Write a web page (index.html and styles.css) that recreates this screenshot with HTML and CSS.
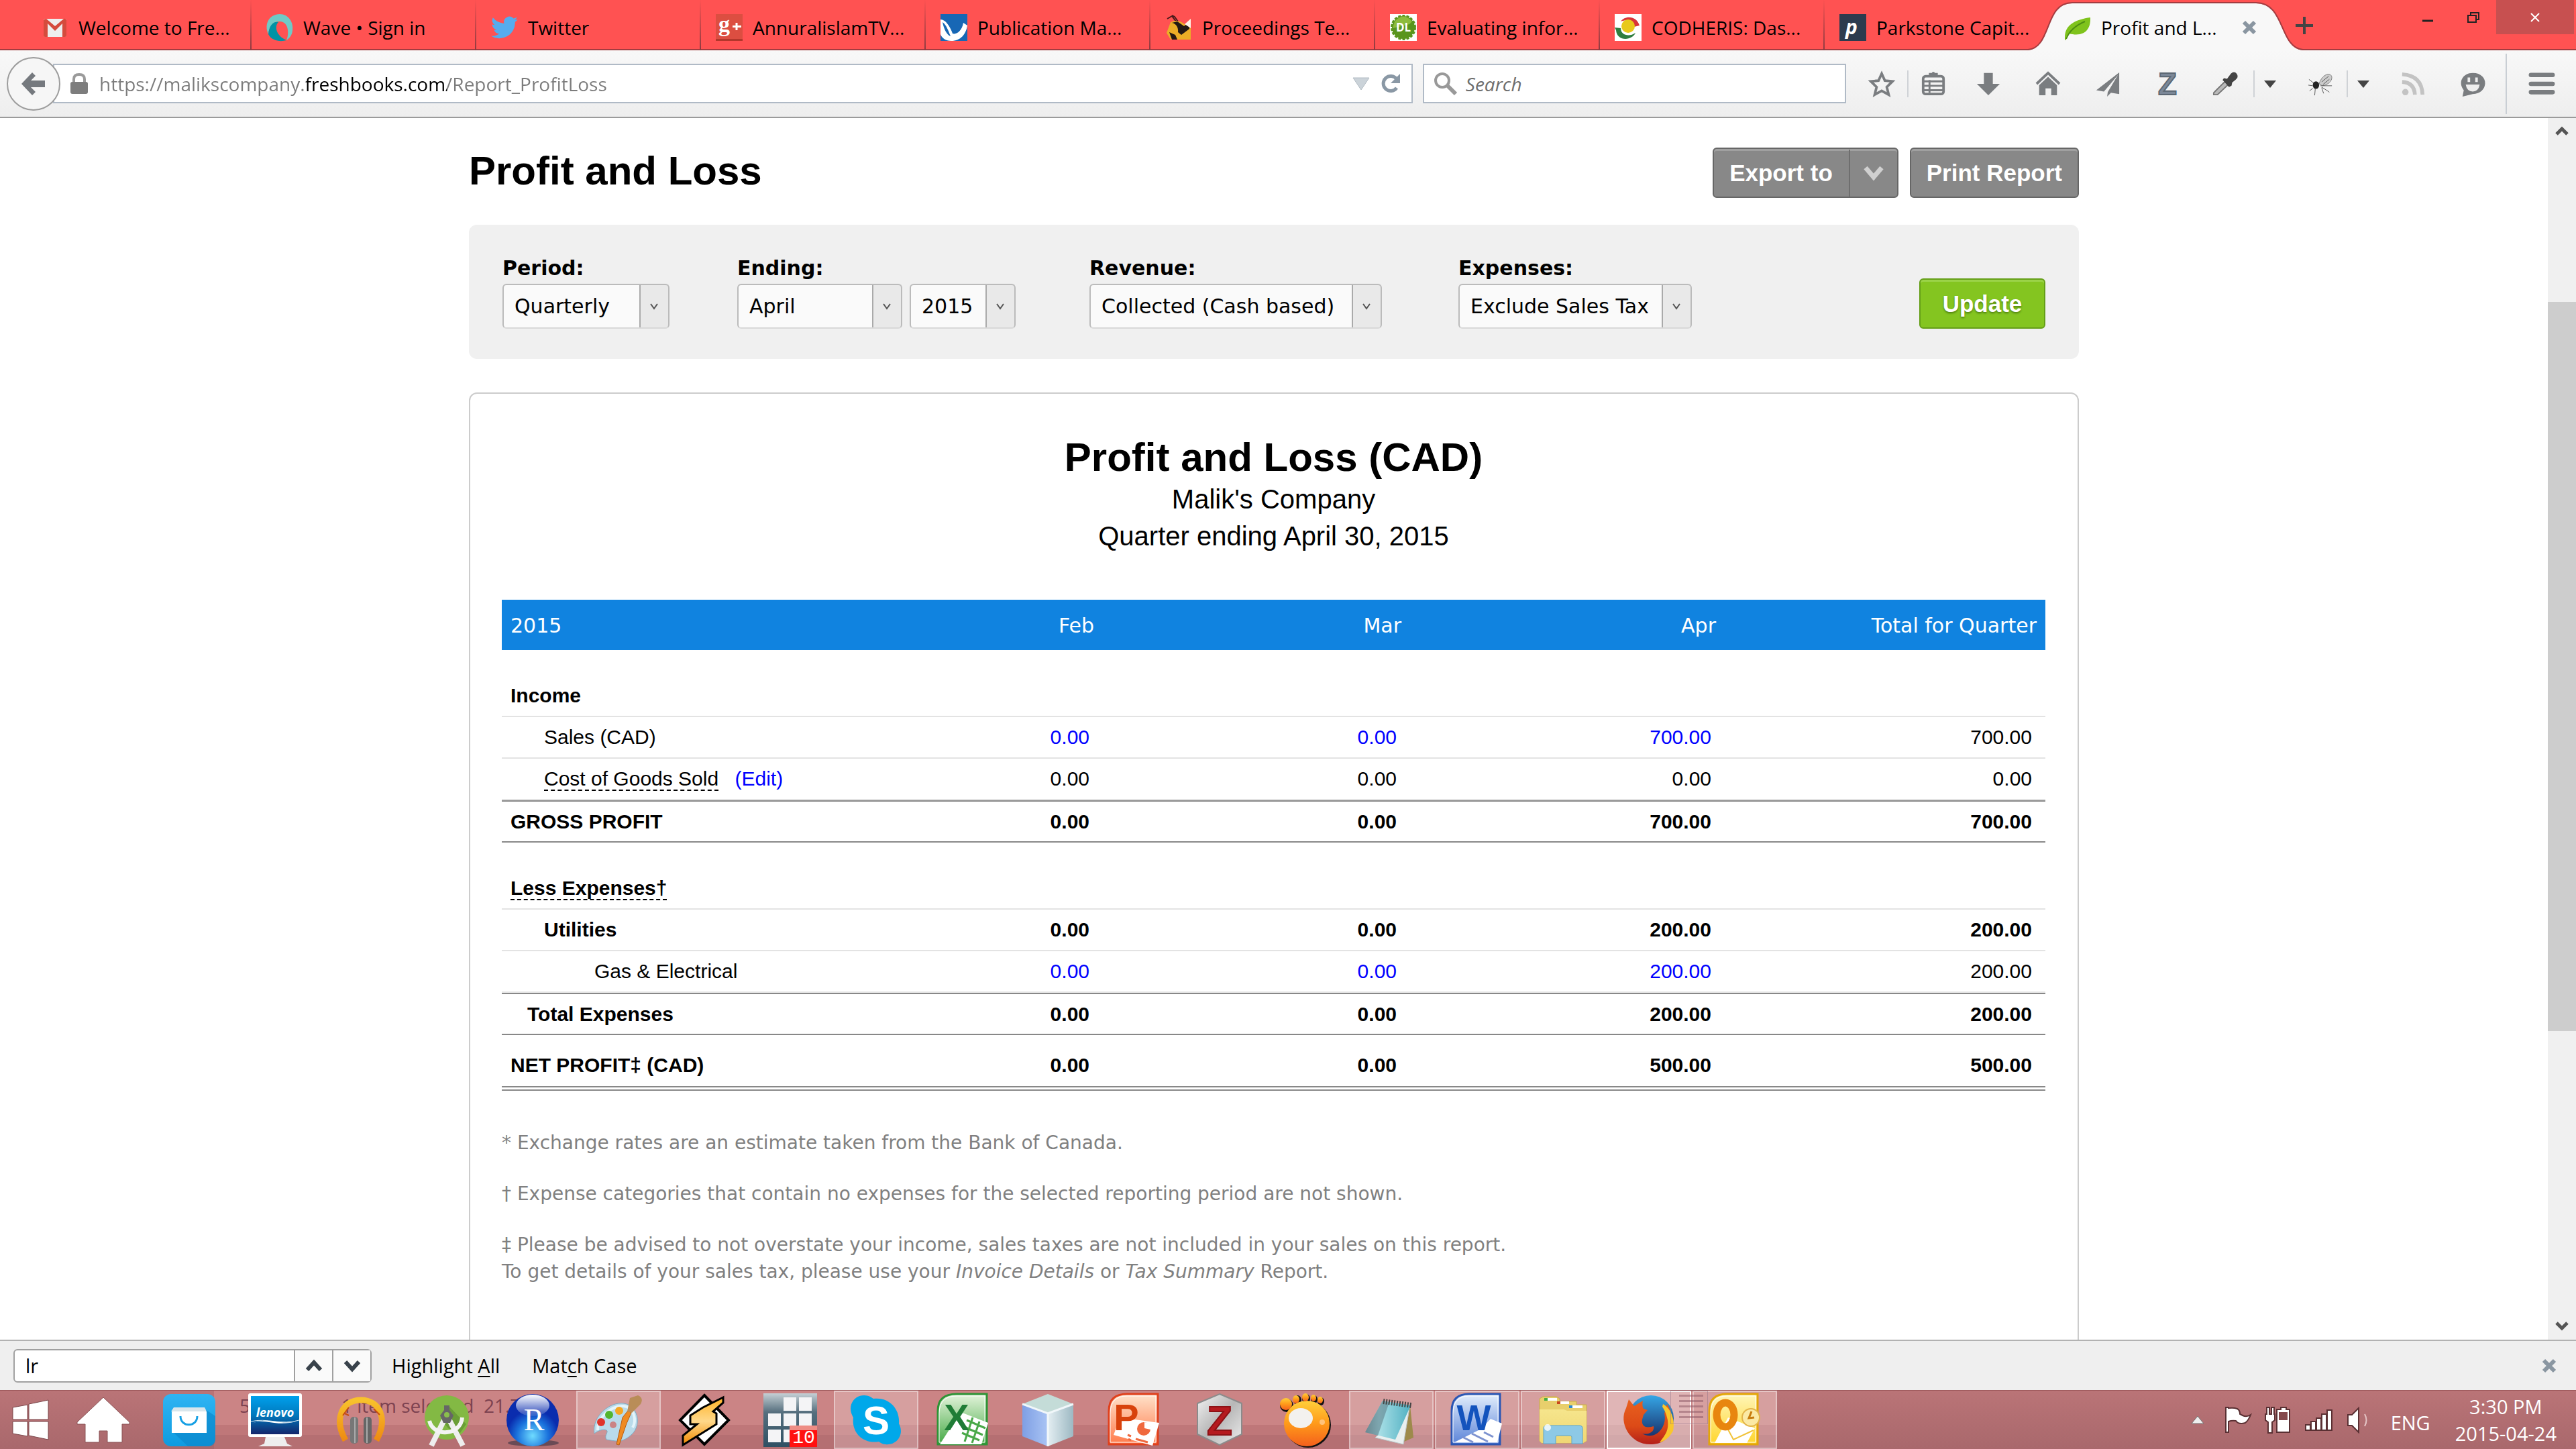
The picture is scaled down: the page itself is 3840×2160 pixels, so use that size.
FILE: index.html
```html
<!DOCTYPE html>
<html lang="en">
<head>
<meta charset="utf-8">
<title>Profit and Loss</title>
<link rel="stylesheet" href="styles.css">
</head>
<body>
<header class="titlebar">
  <nav class="tabs">
    <a class="tab" href="#"><svg class="fav" viewBox="0 0 40 40"><rect x="3" y="7" width="34" height="27" rx="3" fill="#eee"/><path d="M3 9v23q0 2 3 2h3V14l11 11 11-11v20h3q3 0 3-2V9q-1-3-4-2L20 18 7 7Q4 7 3 9z" fill="#d54b3d"/></svg><span>Welcome to Fre...</span></a>
    <a class="tab" href="#"><svg class="fav" viewBox="0 0 40 40"><path d="M3 30C-4 14 5 0 20 0c13 0 21 12 19 25-1 8-6 12-9 14 4-8 4-28-10-28C10 11 4 18 3 30z" fill="#6fcac6"/><path d="M3 30C4 18 10 10 18 12c-6 6-4 20 12 27-10 3-23 0-27-9z" fill="#0093a5"/></svg><span>Wave • Sign in</span></a>
    <a class="tab" href="#"><svg class="fav" viewBox="0 0 24 24"><path fill="#55acee" d="M23.900 4.600a10 10 0 0 1-2.800.8 5 5 0 0 0 2.100-2.700c-1 .6-2 1-3.100 1.200a4.900 4.900 0 0 0-8.400 4.500A14 14 0 0 1 1.700 3.200 4.900 4.900 0 0 0 3.200 9.700a4.900 4.900 0 0 1-2.200-.6v.1a4.900 4.900 0 0 0 3.900 4.800 5 5 0 0 1-2.200.1 4.900 4.900 0 0 0 4.600 3.400A9.900 9.900 0 0 1 0 19.500 14 14 0 0 0 21.500 7.100a10 10 0 0 0 2.400-2.500z"/></svg><span>Twitter</span></a>
    <a class="tab" href="#"><svg class="fav" viewBox="0 0 40 40"><path d="M0 0h40v40H0z" fill="#dc4e41"/><path d="M0 37h40v3H0z" fill="#b3372c"/><text x="4" y="26" class="g" font-size="34" font-weight="700" fill="#fff">g</text><path d="M31 13v11M25 18.500h13" stroke="#fff" stroke-width="3"/></svg><span>AnnuralislamTV...</span></a>
    <a class="tab" href="#"><svg class="fav" viewBox="0 0 40 40"><path d="M0 0h40v40H0z" fill="#1767b5"/><path d="M0 8c8 0 15 12 18 21 6 2 14-4 16-16l6 4c-2 13-10 23-24 23C8 40 2 36 0 30z" fill="#fff"/><path d="M3 12c6 4 9 14 12 21-6-2-10-11-12-21z" fill="#1767b5"/></svg><span>Publication Ma...</span></a>
    <a class="tab" href="#"><svg class="fav" viewBox="0 0 40 40"><path d="M3 7l7-4 9 12M10 2l4 2 7 10" fill="none" stroke="#4a1a1a" stroke-width="2"/><path d="M8 12c9-5 18 0 22 4l8-9v31H8L2 28z" fill="#ecae26"/><path d="M10 13c6 1 10 7 9 14l5 4 12-9V12L28 18 18 11zM6 27l9 4 3 7h-8z" fill="#241a14"/><path d="M29 15l9-8v14z" fill="#fff2e8"/></svg><span>Proceedings Te...</span></a>
    <a class="tab" href="#"><svg class="fav" viewBox="0 0 40 40"><path d="M0 0h40v40H0z" fill="#fff"/><circle cx="20" cy="20" r="17" fill="#5a951d" stroke="#5a951d" stroke-width="4" stroke-dasharray="4 2"/><path d="M7 11Q20-4 33 11l-4 4Q18 18 4 21z" fill="#8dbb3c"/><text x="9" y="26" class="ui" font-weight="700" font-size="17" fill="#fff">DL</text></svg><span>Evaluating infor...</span></a>
    <a class="tab" href="#"><svg class="fav" viewBox="0 0 40 40"><path d="M0 0h40v40H0z" fill="#fff"/><path d="M9 11C16 1 33 3 37 17l-8 2C28 11 18 7 9 11z" fill="#d8343a"/><path d="M0 20l9 1c0 10 12 14 22 7C26 40 3 41 2 24z" fill="#2f7e3f"/><circle cx="20" cy="18" r="10" fill="#e8c91c"/></svg><span>CODHERIS: Das...</span></a>
    <a class="tab" href="#"><svg class="fav" viewBox="0 0 40 40"><path d="M0 0h40v40H0z" fill="#2d3b4e"/><text x="9" y="30" class="ui" font-weight="700" font-style="italic" font-size="30" fill="#fff">p</text></svg><span>Parkstone Capit...</span></a>
    <a class="tab tab-active" href="#"><svg class="tab-shape" viewBox="0 0 410 75" preserveAspectRatio="none"><path d="M0 75C36 72 24 5 66 5H340C384 5 374 72 410 75z" fill="#f8f8f8"/><path d="M0 74C36 71 24 4 66 4H340C384 4 374 71 410 74" fill="none" stroke="#a33c40" stroke-width="2"/></svg><svg class="fav" viewBox="0 0 40 40"><path d="M1 35C1 15 18 8 39 5c1 17-8 30-32 24-3 3-4 5-4 10l-2-1z" fill="#7fc31c"/><path d="M3 37C8 24 19 16 31 11" fill="none" stroke="#4f8f12" stroke-width="2"/></svg><span>Profit and L...</span><svg class="tab-close" viewBox="0 0 22 22"><path d="M3 3l16 16M19 3L3 19" stroke="#8a96a1" stroke-width="6"/></svg></a>
    <button class="newtab" aria-label="New tab"><svg viewBox="0 0 26 26"><path d="M13 0v26M0 13h26" stroke="#444" stroke-width="4"/></svg></button>
  </nav>
  <div class="winctl">
    <button aria-label="Minimize"><svg viewBox="0 0 20 20"><path d="M2 15h16" stroke="#222" stroke-width="3"/></svg></button>
    <button aria-label="Restore"><svg viewBox="0 0 20 20"><path d="M2 7h12v10H2zM6 6V3h12v10h-3" fill="none" stroke="#222" stroke-width="2"/></svg></button>
    <button class="win-close" aria-label="Close"><svg viewBox="0 0 20 20"><path d="M4 4l12 12M16 4L4 16" stroke="#fff" stroke-width="2"/></svg></button>
  </div>
</header>
<div class="toolbar">
  <button class="back" aria-label="Back"><svg viewBox="0 0 40 40"><path d="M2 20L18 3l5 5-7 7h21v10H16l7 7-5 5z" fill="#75797e"/></svg></button>
  <div class="urlbox">
    <svg class="lock" viewBox="0 0 28 32"><path d="M6 15V9q0-7 8-7t8 7v6" fill="none" stroke="#9a9a9a" stroke-width="4"/><rect x="1" y="13" width="26" height="18" rx="3" fill="#7d7d7d"/></svg>
    <input class="url" type="text" aria-label="Address" value="https://malikscompany.freshbooks.com/Report_ProfitLoss">
    <svg class="ud" viewBox="0 0 26 20"><path d="M1 1h24L13 19z" fill="#cbd3d9" stroke="#b3bcc4"/></svg>
    <svg class="reload" viewBox="0 0 30 30"><path d="M24 21a11 11 0 1 1 0-13" fill="none" stroke="#8a98a5" stroke-width="5"/><path d="M29 0v14H15z" fill="#8a98a5"/></svg>
  </div>
  <div class="searchbox">
    <svg viewBox="0 0 36 36"><circle cx="13" cy="13" r="10" fill="none" stroke="#999" stroke-width="4"/><path d="M20 20l13 13" stroke="#999" stroke-width="6"/></svg>
    <input class="search" type="text" aria-label="Search" placeholder="Search">
  </div>
  <div class="tools">
    <button class="t-star" aria-label="Bookmark"><svg viewBox="0 0 40 40"><path d="M20 4l5 11 12 1-9 9 3 12-11-6-11 6 3-12-9-9 12-1z" fill="none" stroke="#7a7d80" stroke-width="4"/></svg></button>
    <button class="t-clip sep" aria-label="Bookmarks list"><svg viewBox="0 0 40 40"><path d="M14 8V4h4q2-4 4 0h4v4z" fill="#7a7d80" stroke="#7a7d80" stroke-width="2"/><rect x="4" y="8" width="32" height="28" rx="4" fill="none" stroke="#7a7d80" stroke-width="4"/><path d="M5 16h30M5 23h30M5 30h30M14 14v20" stroke="#7a7d80" stroke-width="3"/></svg></button>
    <button aria-label="Downloads"><svg viewBox="0 0 40 40"><path d="M13 3h14v17h11L20 38 2 20h11z" fill="#7a7d80"/></svg></button>
    <button aria-label="Home"><svg viewBox="0 0 40 40"><path d="M2 20L20 3l18 17" fill="none" stroke="#7a7d80" stroke-width="4"/><path d="M6 22L20 9l14 13v16H25V27h-9v11H6z" fill="#7a7d80"/></svg></button>
    <button aria-label="Send"><svg viewBox="0 0 40 40"><path d="M38 2L2 30l12 2L36 6 20 33l-1 7 6-6 13 2z" fill="#7a7d80"/></svg></button>
    <button aria-label="Zotero"><svg viewBox="0 0 40 40"><text x="20" y="37" class="arial" text-anchor="middle" font-weight="700" font-size="48" fill="#7b8797" stroke="#5c6773" stroke-width="2">Z</text></svg></button>
    <button class="t-pick" aria-label="Color picker"><svg viewBox="0 0 40 40"><path d="M2 34L21 15l5 5L8 37H2z" fill="#b9b9b9" stroke="#777" stroke-width="2"/><path d="M18 11l5 1 6-8q5-5 9 0t-2 10l-5 4-1 5-4 2-10-11z" fill="#444"/></svg></button>
    <button class="t-dd sep" aria-label="Picker menu"><svg viewBox="0 0 20 20"><path d="M1 5h18L10 16z" fill="#444"/></svg></button>
    <button class="t-fly" aria-label="Inspector"><svg viewBox="0 0 40 40"><path d="M18 20C21 9 31 2 36 6s0 15-13 17z" fill="#ccc" stroke="#777"/><ellipse cx="13" cy="22" rx="5" ry="6" fill="#222"/><path d="M2 13l8 6M1 22l7 1M12 27L11 38M20 23l18 0M22 25l12 8M8 27l-5 4M22 26l3 9M22 17L33 8M24 21l10-8" stroke="#555"/></svg></button>
    <button class="t-dd sep" aria-label="Inspector menu"><svg viewBox="0 0 20 20"><path d="M1 5h18L10 16z" fill="#444"/></svg></button>
    <button class="t-rss" aria-label="Subscribe"><svg viewBox="0 0 40 40"><circle cx="8" cy="33" r="5" fill="#c3c3c3"/><path d="M3 17q19 1 20 20M3 5q31 2 32 32" fill="none" stroke="#c3c3c3" stroke-width="6"/></svg></button>
    <button class="t-chat" aria-label="Chat"><svg viewBox="0 0 40 40"><path d="M20 3c27 0 25 33 0 33l-16 4 2-10C-4 17 5 3 20 3z" fill="#7a7d80"/><path d="M9 21h22q-2 11-11 11T9 21z" fill="#eee"/><path d="M14 10v7M26 10v7" stroke="#eee" stroke-width="4"/></svg></button>
    <button class="t-menu" aria-label="Menu"><svg viewBox="0 0 40 40"><path d="M3 6h34M3 20h34M3 33h34" stroke="#7a7d80" stroke-width="7" stroke-linecap="round"/></svg></button>
  </div>
</div>

<div class="window">
  <main class="viewport">
    <div class="page">
      <div class="heading">
        <h1>Profit and Loss</h1>
        <div class="actions">
          <button class="btn split"><span>Export to</span><svg viewBox="0 0 30 24"><path d="M3 4l12 14L27 4" fill="none" stroke="#d0d0d0" stroke-width="7"/></svg></button>
          <button class="btn">Print Report</button>
        </div>
      </div>
      <form class="filters">
        <div class="field"><label for="period">Period:</label>
          <span class="pick w-period"><select id="period"><option>Quarterly</option></select><svg viewBox="0 0 12 10"><path d="M1 1l5 7 5-7" fill="none" stroke="#555" stroke-width="2"/></svg></span></div>
        <div class="field"><label for="month">Ending:</label>
          <div class="pair"><span class="pick w-month"><select id="month"><option>April</option></select><svg viewBox="0 0 12 10"><path d="M1 1l5 7 5-7" fill="none" stroke="#555" stroke-width="2"/></svg></span>
          <span class="pick w-year"><select aria-label="Year"><option>2015</option></select><svg viewBox="0 0 12 10"><path d="M1 1l5 7 5-7" fill="none" stroke="#555" stroke-width="2"/></svg></span></div></div>
        <div class="field"><label for="rev">Revenue:</label>
          <span class="pick w-rev"><select id="rev"><option>Collected (Cash based)</option></select><svg viewBox="0 0 12 10"><path d="M1 1l5 7 5-7" fill="none" stroke="#555" stroke-width="2"/></svg></span></div>
        <div class="field"><label for="exp">Expenses:</label>
          <span class="pick w-exp"><select id="exp"><option>Exclude Sales Tax</option></select><svg viewBox="0 0 12 10"><path d="M1 1l5 7 5-7" fill="none" stroke="#555" stroke-width="2"/></svg></span></div>
        <button class="btn update" type="button">Update</button>
      </form>
      <section class="report">
        <h2>Profit and Loss (CAD)</h2>
        <p class="sub">Malik's Company</p>
        <p class="sub">Quarter ending April 30, 2015</p>
        <table>
          <colgroup><col class="c-name"><col class="c-feb"><col class="c-mar"><col class="c-apr"><col class="c-tot"></colgroup>
          <thead><tr><th>2015</th><th>Feb</th><th>Mar</th><th>Apr</th><th>Total for Quarter</th></tr></thead>
          <tbody>
            <tr class="group"><td colspan="5">Income</td></tr>
            <tr><td class="in2">Sales (CAD)</td><td><a href="#">0.00</a></td><td><a href="#">0.00</a></td><td><a href="#">700.00</a></td><td>700.00</td></tr>
            <tr><td class="in2"><span class="hint">Cost of Goods Sold</span> <a class="edit" href="#">(Edit)</a></td><td>0.00</td><td>0.00</td><td>0.00</td><td>0.00</td></tr>
            <tr class="total"><td>GROSS PROFIT</td><td>0.00</td><td>0.00</td><td>700.00</td><td>700.00</td></tr>
            <tr class="group"><td colspan="5"><span class="hint">Less Expenses†</span></td></tr>
            <tr class="strong"><td class="in2">Utilities</td><td>0.00</td><td>0.00</td><td>200.00</td><td>200.00</td></tr>
            <tr><td class="in3">Gas &amp; Electrical</td><td><a href="#">0.00</a></td><td><a href="#">0.00</a></td><td><a href="#">200.00</a></td><td>200.00</td></tr>
            <tr class="total"><td class="in1">Total Expenses</td><td>0.00</td><td>0.00</td><td>200.00</td><td>200.00</td></tr>
            <tr class="net"><td>NET PROFIT‡ (CAD)</td><td>0.00</td><td>0.00</td><td>500.00</td><td>500.00</td></tr>
          </tbody>
        </table>
        <div class="notes">
          <p>* Exchange rates are an estimate taken from the Bank of Canada.</p>
          <p>† Expense categories that contain no expenses for the selected reporting period are not shown.</p>
          <p>‡ Please be advised to not overstate your income, sales taxes are not included in your sales on this report.<br>To get details of your sales tax, please use your <i>Invoice Details</i> or <i>Tax Summary</i> Report.</p>
        </div>
      </section>
    </div>
  </main>
  <div class="scrollbar">
    <svg viewBox="0 0 42 42"><path d="M13 24l8-8 8 8" fill="none" stroke="#555" stroke-width="5"/></svg>
    <div class="thumb"></div>
    <svg viewBox="0 0 42 42"><path d="M13 17l8 8 8-8" fill="none" stroke="#555" stroke-width="5"/></svg>
  </div>
</div>

<div class="findbar">
  <div class="findbox">
    <input type="text" aria-label="Find in page" value="lr">
    <button aria-label="Previous"><svg viewBox="0 0 26 20"><path d="M3 16L13 5l10 11" fill="none" stroke="#39424b" stroke-width="6"/></svg></button>
    <button aria-label="Next"><svg viewBox="0 0 26 20"><path d="M3 4l10 11L23 4" fill="none" stroke="#39424b" stroke-width="6"/></svg></button>
  </div>
  <button class="flat">Highlight <u>A</u>ll</button>
  <button class="flat">Mat<u>c</u>h Case</button>
  <button class="findclose" aria-label="Close find bar"><svg viewBox="0 0 22 22"><path d="M3 3l16 16M19 3L3 19" stroke="#8a96a1" stroke-width="6"/></svg></button>
</div>

<footer class="taskbar">
  <svg width="0" height="0" class="defs"><defs>
    <linearGradient id="blue" x2="0" y2="1"><stop stop-color="#2fb4f3"/><stop offset="1" stop-color="#0d9be0"/></linearGradient>
    <linearGradient id="scr" x2="0" y2="1"><stop stop-color="#00a0ec"/><stop offset=".5" stop-color="#0079bd"/><stop offset="1" stop-color="#14256b"/></linearGradient>
    <linearGradient id="phone" x2="0" y2="1"><stop stop-color="#f8c22c"/><stop offset="1" stop-color="#ee8a12"/></linearGradient>
    <radialGradient id="rball" cy=".8"><stop stop-color="#6fdcff"/><stop offset=".6" stop-color="#1a72dc"/><stop offset="1" stop-color="#0a2cae"/></radialGradient>
    <linearGradient id="gloss" x2="0" y2="1"><stop stop-color="#fff"/><stop offset="1" stop-color="#fff" stop-opacity=".1"/></linearGradient>
    <linearGradient id="bolt" x2="0" y2="1"><stop stop-color="#ffb326"/><stop offset=".5" stop-color="#ffd88a"/><stop offset="1" stop-color="#f38a00"/></linearGradient>
    <linearGradient id="tiles" x2="0" y2="1"><stop stop-color="#c5d0d5"/><stop offset=".35" stop-color="#566f7e"/><stop offset="1" stop-color="#2f5063"/></linearGradient>
    <linearGradient id="xl" x2="0" y2="1"><stop stop-color="#e4f4dc"/><stop offset="1" stop-color="#45a944"/></linearGradient>
    <linearGradient id="pp" x2="0" y2="1"><stop stop-color="#ffe3cb"/><stop offset="1" stop-color="#ff7a4a"/></linearGradient>
    <linearGradient id="wd" x2="0" y2="1"><stop stop-color="#e3eefc"/><stop offset="1" stop-color="#5a83d8"/></linearGradient>
    <linearGradient id="ol" x2="0" y2="1"><stop stop-color="#fff6b8"/><stop offset="1" stop-color="#ffd52c"/></linearGradient>
    <linearGradient id="orange" x2="0" y2="1"><stop stop-color="#ffcf3a"/><stop offset=".5" stop-color="#ff9a1a"/><stop offset="1" stop-color="#f4601c"/></linearGradient>
    <linearGradient id="pad" x2="1"><stop stop-color="#77949d"/><stop offset=".3" stop-color="#a9dfe6"/><stop offset="1" stop-color="#4fb0c2"/></linearGradient>
    <linearGradient id="cubeL" x2="1"><stop stop-color="#7f9fe4"/><stop offset="1" stop-color="#a9c4f4"/></linearGradient>
    <linearGradient id="cubeR" x2="1"><stop stop-color="#e4eef2"/><stop offset="1" stop-color="#9db9c3"/></linearGradient>
    <linearGradient id="silver" x2="1" y2="1"><stop stop-color="#f4f4f4"/><stop offset=".5" stop-color="#b7b7b7"/><stop offset="1" stop-color="#ededed"/></linearGradient>
    <linearGradient id="fold" x2="0" y2="1"><stop stop-color="#f6e58c"/><stop offset="1" stop-color="#efd774"/></linearGradient>
    <linearGradient id="fox" x2="0" y2="1"><stop stop-color="#e8611f"/><stop offset=".6" stop-color="#dc4a17"/><stop offset="1" stop-color="#b41f1a"/></linearGradient>
    <linearGradient id="globe" x2="0" y2="1"><stop stop-color="#35a6e6"/><stop offset="1" stop-color="#16255e"/></linearGradient>
  </defs></svg>
  <div class="ghost" aria-hidden="true"><span>5</span><span>1 item selected&nbsp; 21.7</span></div>
  <div class="ghost-list" aria-hidden="true"></div>
  <button class="start" aria-label="Start"><svg viewBox="0 0 80 80"><path d="M14 21l22-4v22H14zM38 16l29-6v29H38zM14 42h22v22l-22-4zM38 42h29v27l-29-6z" fill="#fff" stroke="#7b474b"/></svg></button>
  <button class="task" aria-label="Home"><svg viewBox="0 0 80 80"><path d="M40 6l39 37v3H68v27H46V56H34v17H13V46H1v-3z" fill="#fff" stroke="#8a5255"/></svg></button>
  <button class="task" aria-label="Store"><svg viewBox="0 0 80 80"><rect x="1" y="1" width="78" height="78" rx="12" fill="url(#blue)"/><path d="M16 58l22 21h30q11 0 11-11V34L64 24z" fill="#0a86c9" opacity=".6"/><path d="M17 22h46l3 6v31H14V28z" fill="#fff"/><path d="M13 27l4-6h46l3 6z" fill="#d9e6ec"/><path d="M27 34c0 17 25 17 25 0" fill="none" stroke="#17a0e4" stroke-width="3"/></svg></button>
  <button class="task" aria-label="Lenovo"><svg viewBox="0 0 80 80"><rect width="80" height="65" rx="3" fill="#fff"/><path d="M26 65h28l4 10 8 4H15l9-4z" fill="#eee"/><path d="M4 4h72v57H4z" fill="url(#scr)"/><text x="40" y="35" class="ui" text-anchor="middle" font-weight="700" font-style="italic" font-size="18" fill="#fff">lenovo</text><path d="M4 46c20-12 32 6 72-5-30 8-50-8-72 5z" fill="#fff"/><path d="M4 42c24-6 45 6 72-2" fill="none" stroke="#cfe6f2"/></svg></button>
  <button class="task" aria-label="Music"><svg viewBox="0 0 80 80"><path d="M17 70C-1 38 12 10 40 10s41 28 23 60" fill="none" stroke="url(#phone)" stroke-width="9"/><path d="M13 33l9-12M59 23l9 9M16 30l6 3" stroke="#c64d12" stroke-width="2"/><rect x="24" y="35" width="12" height="40" rx="5" fill="#777"/><rect x="44" y="35" width="12" height="40" rx="5" fill="#666"/><path d="M31 36v38M49 36v38" stroke="#aaa" stroke-width="2"/></svg></button>
  <button class="task" aria-label="Android Studio"><svg viewBox="0 0 80 80"><circle cx="40" cy="36" r="33" fill="#83b944"/><path d="M44 20l25 26-14 20-20-22z" fill="#6a9e36"/><path d="M36 40L17 78M44 40l20 38" stroke="#eee" stroke-width="8"/><path d="M14 41c6 25 47 22 49-5" fill="none" stroke="#f3f3f3" stroke-width="6"/><path d="M36 18h8v7l6 8-5 11h-10l-5-11 6-8z" fill="#666"/><circle cx="40" cy="32" r="4" fill="#8abf4c"/></svg></button>
  <button class="task" aria-label="RStudio"><svg viewBox="0 0 80 80"><ellipse cx="41" cy="74" rx="38" ry="5" fill="#6a4a55"/><circle cx="40" cy="40" r="39" fill="url(#rball)"/><ellipse cx="40" cy="18" rx="25" ry="16" fill="url(#gloss)"/><text x="42" y="55" class="g" text-anchor="middle" font-size="46" fill="#fff">R</text></svg></button>
  <button class="task open" aria-label="Paint"><svg viewBox="0 0 80 80"><path d="M4 60C0 34 27 12 48 15s27 32 12 46-24 10-38 8c-4-6 4-12 0-14s-12 0-18 5z" fill="#b9dbea" stroke="#7fa9c0"/><path d="M9 55C8 36 30 18 47 19s20 22 14 32" fill="none" stroke="#e4f4fa" stroke-width="4"/><circle cx="32" cy="47" r="5" fill="#ca8485"/><circle cx="14" cy="43" r="6" fill="#e0342a"/><circle cx="26" cy="32" r="6" fill="#53b52f"/><circle cx="41" cy="26" r="6" fill="#f6a623"/><path d="M37 76l9-40 8-10 5 3-7 16-11 32z" fill="#ee8a22" stroke="#b65e12"/><path d="M53 27l4-20 12-4q9 4 4 13l-13 13z" fill="#b98d58"/></svg></button>
  <button class="task" aria-label="Winamp"><svg viewBox="0 0 80 80"><path d="M40 3l36 37-36 36L4 40z" fill="#fff" stroke="#000" stroke-width="4"/><path d="M68 6L38 21 19 33v13h10L8 63v14l50-31V30l-5-3 15-13z" fill="url(#bolt)" stroke="#000" stroke-width="3"/></svg></button>
  <button class="task" aria-label="Calendar"><svg viewBox="0 0 80 80"><path d="M0 0h80v80H0z" fill="url(#tiles)"/><path d="M30 6h19v20H30zM53 6h19v20H53zM7 30h19v19H7zM30 30h19v19H30zM53 30h19v19H53zM7 54h19v19H7zM30 54h19v19H30z" fill="#f4f4f6"/><path d="M39 48h41v32H39z" fill="#f11"/><path d="M39 48h41v7H39z" fill="#ee8d85"/><text x="60" y="74" class="mono" text-anchor="middle" font-size="28" fill="#fff">10</text></svg></button>
  <button class="task open" aria-label="Skype"><svg viewBox="0 0 80 80"><path d="M22 3c7 0 11 3 14 5 24-3 40 16 38 37 9 17-4 33-20 31-4 0-7-2-10-4C20 76 3 58 6 36-4 20 6 3 22 3z" fill="#00a8ea"/><text x="40" y="61" class="arial" text-anchor="middle" font-weight="700" font-size="60" fill="#fff">S</text></svg></button>
  <button class="task" aria-label="Excel"><svg viewBox="0 0 80 80"><path d="M4 76V26Q4 1 32 1h45v75z" fill="url(#xl)" stroke="#2e9436" stroke-width="3"/><path d="M6 73V30Q6 4 32 4h42v69z" fill="none" stroke="#fff"/><path d="M38 28l41 16-10 32H7z" fill="#fff"/><path d="M47 40l28 12M43 50l28 12M40 59l26 11M56 36L44 72M66 42L55 74" stroke="#49a948" stroke-width="3"/><text x="32" y="55" class="arial" text-anchor="middle" font-weight="700" font-size="56" fill="#1f7c36">X</text></svg></button>
  <button class="task" aria-label="VirtualBox"><svg viewBox="0 0 80 80"><path d="M40 1l38 15-38 14L2 16z" fill="#c4dcd8"/><path d="M2 16l38 14v49L2 64z" fill="url(#cubeL)"/><path d="M78 16L40 30v49l38-15z" fill="url(#cubeR)"/><path d="M40 30v49M2 16l38 14 38-14" fill="none" stroke="#f1f7fa" stroke-width="3"/></svg></button>
  <button class="task" aria-label="PowerPoint"><svg viewBox="0 0 80 80"><path d="M3 76V26Q3 1 30 1h46v75z" fill="url(#pp)" stroke="#e0401c" stroke-width="3"/><path d="M5 73V30Q5 4 30 4h43v69z" fill="none" stroke="#fff"/><path d="M20 36l58 8-10 34-58-16z" fill="#fff"/><circle cx="55" cy="53" r="10" fill="#f0693e"/><path d="M56 52v-9q10 1 9 11z" fill="#fff"/><path d="M31 62l5 2M43 68l18 5M32 68l4 2" stroke="#f0693e" stroke-width="3"/><text x="29" y="55" class="arial" text-anchor="middle" font-weight="700" font-size="56" fill="#d8420c">P</text></svg></button>
  <button class="task" aria-label="Zotero"><svg viewBox="0 0 80 80"><path d="M40 1l33 14v46L40 77 7 61V15z" fill="url(#silver)" stroke="#8b8b8b" stroke-width="2"/><text x="40" y="62" class="arial" text-anchor="middle" font-weight="700" font-size="62" fill="#b51a1f" stroke="#8d1216" stroke-width="2">Z</text></svg></button>
  <button class="task" aria-label="GOM Player"><svg viewBox="0 0 80 80"><g fill="#111"><circle cx="44" cy="47" r="34"/><circle cx="12" cy="18" r="10"/><ellipse cx="28" cy="10" rx="6" ry="7"/><ellipse cx="41" cy="8" rx="6" ry="7"/><ellipse cx="53" cy="9" rx="5" ry="6"/><ellipse cx="63" cy="12" rx="5" ry="6"/></g><g fill="url(#orange)"><circle cx="42" cy="45" r="34"/><circle cx="11" cy="16" r="9"/><ellipse cx="26" cy="9" rx="5" ry="6"/><ellipse cx="40" cy="6" rx="5" ry="6"/><ellipse cx="52" cy="7" rx="4" ry="5"/><ellipse cx="62" cy="10" rx="4" ry="5"/></g><ellipse cx="33" cy="37" rx="18" ry="15" fill="#f3f1ee"/><circle cx="65" cy="43" r="4" fill="#ffc27a"/></svg></button>
  <button class="task open" aria-label="Notepad"><svg viewBox="0 0 80 80"><path d="M68 18l5 48-14 6z" fill="#9d8a4b"/><path d="M68 16L58 76 16 66z" fill="#e9efef" stroke="#b9c4c6"/><path d="M27 11l42 7-23 51L1 58z" fill="url(#pad)"/><path d="M1 58L27 11l10 2L20 63z" fill="#60808a" opacity=".6"/><path d="M28 12l42 6" stroke="#444" stroke-width="8" stroke-dasharray="2 2"/></svg></button>
  <button class="task open" aria-label="Word"><svg viewBox="0 0 80 80"><path d="M2 76V26Q2 1 28 1h46v75z" fill="url(#wd)" stroke="#2a56b4" stroke-width="3"/><path d="M4 73V30Q4 4 28 4h43v69z" fill="none" stroke="#fff"/><path d="M60 38l17 7-7 28H6l40-20z" fill="#fff"/><path d="M50 58l14 7M32 60l24 12M18 65l16 8" stroke="#7d92cf" stroke-width="3"/><text x="35" y="55" class="arial" text-anchor="middle" font-weight="700" font-size="54" fill="#1353bd">W</text></svg></button>
  <button class="task open" aria-label="File Explorer"><svg viewBox="0 0 80 80"><path d="M5 20V8l5-3h20l5 3v4h25v5h15v54l-5 3H8l-3-3z" fill="#e8cf6c" stroke="#c9ac48"/><path d="M12 7h19v4H12zM31 12h18v4H31zM49 18h20v4H49z" fill="#fff"/><path d="M12 7h5v4h-5z" fill="#46ad3f"/><path d="M31 12h5v4h-5z" fill="#c9461d"/><path d="M49 18h5v4h-5z" fill="#2a8ad0"/><path d="M5 24h36l5 2h29v45l-5 3H8l-3-3z" fill="url(#fold)"/><path d="M11 75V52q0-4 5-4h48q5 0 5 4v23H53V65q0-2-3-2H31q-2 0-2 2v10z" fill="#8dc9e6" stroke="#5aa5cd"/><circle cx="17" cy="51" r="5" fill="#fff" opacity=".8"/></svg></button>
  <button class="task open focus" aria-label="Firefox"><svg viewBox="0 0 80 80"><circle cx="43" cy="37" r="34" fill="url(#globe)"/><path d="M67 16c12 17 13 59-22 60C12 78-6 44 6 22l4-13 8 10 13-8c-1 5-1 9 1 12l6 2-6 7-2 7c-2 14 11 12 17 10 2 10-10 13-17 11 20 12 38-11 33-30z" fill="url(#fox)"/><path d="M61 16c14 8 18 26 15 40-6 11-14 16-20 17 9-12 14-18 12-33-2-9-4-14-8-20z" fill="#f9c62d"/></svg></button>
  <button class="task open" aria-label="Outlook"><svg viewBox="0 0 80 80"><path d="M2 76V26Q2 1 28 1h46v75z" fill="url(#ol)" stroke="#e3a508" stroke-width="3"/><path d="M4 73V30Q4 4 28 4h43v69z" fill="none" stroke="#fff"/><path d="M10 74l20-38 40 16-12 22z" fill="#fff"/><path d="M30 54l8 15 30-14" fill="none" stroke="#f1c33a" stroke-width="2"/><ellipse cx="26" cy="32" rx="13" ry="18" fill="none" stroke="#e8860f" stroke-width="11"/><circle cx="64" cy="36" r="13" fill="#fbe9a4" stroke="#e3b54a" stroke-width="2"/><path d="M65 27l-4 10 8-1" fill="none" stroke="#c77c0d" stroke-width="3"/></svg></button>
  <div class="tray">
    <svg class="up" viewBox="0 0 20 14"><path d="M10 1l9 11H1z" fill="#eee" stroke="#777"/></svg>
    <svg class="ti" viewBox="0 0 40 40"><path d="M2 1h4v1q8-1 13 1 4 2 4 8l4 2q6 3 12-1-3 8-8 12-10 3-14-3-6-1-11 1v16H2z" fill="#fff" stroke="#5a3033" stroke-width="2"/></svg>
    <svg class="ti" viewBox="0 0 40 40"><path d="M3 1h4v10h3V1h4v10h1v9l-4 3v16H5V23l-4-3v-9h2z" fill="#fff" stroke="#5a3033" stroke-width="2"/><path d="M20 4h4V1h8v3h5v34H18V4z" fill="#fff" stroke="#5a3033" stroke-width="2"/><path d="M21 8h13v12H21z" fill="#84484b"/></svg>
    <svg class="ti" viewBox="0 0 40 40"><path d="M1 27h7v8H1zM9 22h7v13H9zM17 17h7v18h-7zM25 11h7v24h-7zM33 5h7v30h-7z" fill="#fff" stroke="#5a3033" stroke-width="2"/></svg>
    <svg class="ti" viewBox="0 0 40 40"><path d="M4 12h6L20 2v36L10 28H4z" fill="#fff" stroke="#5a3033" stroke-width="2"/><path d="M29 11q5 9 0 18" fill="none" stroke="#e5c5c6" stroke-width="2"/></svg>
    <span class="lang">ENG</span>
    <div class="clock"><span>3:30 PM</span><span>2015-04-24</span></div>
  </div>
</footer>
</body>
</html>
```
FILE: styles.css
```css
* { box-sizing: border-box; }
body {
  margin: 0;
  height: 100vh;
  display: flex;
  flex-direction: column;
  overflow: hidden;
  background: #fff;
  color: #000;
  font: 28px/40px "Open Sans", "Noto Sans", sans-serif;
}
button { border: 0; padding: 0; background: none; font: inherit; color: inherit; }
svg { display: block; flex: none; overflow: visible; }
input { font: inherit; color: inherit; border: 0; padding: 0; background: none; min-width: 0; }
.ui { font-family: "Open Sans", sans-serif; }
.g { font-family: "Liberation Serif", serif; }
.arial { font-family: "Liberation Sans", sans-serif; }
.mono { font-family: "Liberation Mono", monospace; }

/* tab strip */
.titlebar {
  flex: none;
  display: flex;
  justify-content: space-between;
  height: 75px;
  background: #ff5252;
  border-bottom: 2px solid #a33c40;
}
.tabs { display: flex; padding-left: 40px; }
.tab {
  position: relative;
  display: flex;
  align-items: center;
  gap: 15px;
  width: 335px;
  height: 75px;
  padding: 6px 0 0 22px;
  color: #000;
  text-decoration: none;
  white-space: nowrap;
  border-right: 2px solid;
  border-image: linear-gradient(#ff5252, #8a3a40) 1;
}
.tab:nth-child(n+9) { border-right-color: transparent; border-image: none; }
.fav { width: 40px; height: 40px; }
.tab-active > * { position: relative; }
.tab-active .tab-shape { position: absolute; left: -32px; top: 0; width: 410px; height: 75px; }
.tab-close { width: 22px; height: 22px; margin-left: 22px; }
.newtab { width: 26px; margin: 2px 0 0 32px; }
.newtab svg { width: 26px; height: 26px; }
.winctl { display: flex; align-items: flex-start; padding-right: 3px; }
.winctl button { display: flex; align-items: center; justify-content: center; width: 68px; height: 51px; }
.winctl svg { width: 20px; height: 20px; }
.winctl .win-close { width: 116px; background: #c75050; }

/* navigation toolbar */
.toolbar {
  flex: none;
  display: flex;
  align-items: center;
  height: 101px;
  padding-left: 10px;
  background: linear-gradient(#f8f8f8, #eeeeee);
  border-bottom: 2px solid #9b9b9b;
}
.back {
  position: relative;
  z-index: 1;
  flex: none;
  display: flex;
  align-items: center;
  justify-content: center;
  width: 80px;
  height: 80px;
  border: 2px solid #9c9c9c;
  border-radius: 50%;
  background: #f6f6f6;
}
.back svg { width: 40px; height: 40px; }
.urlbox, .searchbox {
  display: flex;
  align-items: center;
  height: 59px;
  background: #fff;
  border: 2px solid #b0bac6;
}
.urlbox { flex: 2026 1 2026px; margin-left: -11px; padding: 0 16px 0 23px; }
.lock { width: 28px; height: 32px; }
.url {
  flex: 1;
  margin: 0 20px 0 16px;
  height: 44px;
  color: transparent;
  background: linear-gradient(90deg, #7c7c7c 308px, #000 308px 518px, #7c7c7c 518px);
  -webkit-background-clip: text;
  background-clip: text;
}
.ud { width: 26px; height: 20px; margin-right: 16px; }
.reload { width: 30px; height: 30px; }
.searchbox { flex: 631 1 631px; margin-left: 15px; padding: 0 14px; gap: 12px; }
.searchbox svg { width: 36px; height: 36px; }
.search { flex: 1; font-style: italic; }
.search::placeholder { color: #6d6d6d; opacity: 1; }
.tools { display: flex; flex: none; align-items: center; padding-left: 15px; }
.tools button { display: flex; align-items: center; justify-content: center; width: 89px; height: 40px; }
.tools svg { width: 38px; height: 38px; }
.tools .t-star { width: 76px; }
.tools .t-clip { width: 76px; }
.tools .t-pick { width: 84px; }
.tools .t-dd { width: 48px; }
.tools .t-dd svg { width: 20px; height: 20px; }
.tools .t-fly { width: 91px; padding-left: 12px; }
.tools .t-rss { margin-left: 6px; }
.tools .t-chat { margin-right: 5px; }
.tools .sep { border-left: 2px solid #cfd2d6; }
.tools .t-menu { width: 105px; height: 90px; border-left: 2px solid #c9ced4; }

/* page area */
.window { flex: 1; display: flex; min-height: 0; }
.viewport { flex: 1; min-width: 0; overflow: hidden; }
.page { max-width: 2400px; margin: 0 auto; padding-top: 44px; }
.heading { display: flex; justify-content: space-between; align-items: flex-start; margin-bottom: 40px; }
h1, h2 { margin: 0; font: bold 60px/70px "Liberation Sans", sans-serif; }
.actions { display: flex; gap: 17px; }
.btn {
  height: 75px;
  padding: 0 23px;
  font: bold 35px/70px "Liberation Sans", sans-serif;
  color: #fff;
  background: #888;
  border: 2px solid #666;
  border-radius: 6px;
  box-shadow: inset 0 3px #a0a0a0;
  white-space: nowrap;
}
.split { display: flex; align-items: center; padding-right: 0; }
.split span { padding-right: 24px; border-right: 2px solid #6e6e6e; }
.split svg { width: 30px; height: 24px; margin: 0 20px; }
.btn.update { background: #84c520; border-color: #649e17; box-shadow: inset 0 3px #9bd348; text-shadow: 0 2px 3px #4f8010; padding: 0; }
.filters {
  display: grid;
  grid-template-columns: 350fr 525fr 550fr 687fr 188fr;
  align-items: end;
  padding: 44px 50px 45px;
  background: #f0f0f0;
  border-radius: 12px;
}
.field label { display: block; margin-bottom: 2px; font: bold 30px/42px "DejaVu Sans", sans-serif; }
.pair { display: flex; gap: 11px; }
.pick { display: grid; align-items: center; }
.pick > * { grid-area: 1 / 1; }
.pick svg { justify-self: end; width: 12px; height: 10px; margin-right: 17px; pointer-events: none; }
.pick select {
  appearance: none;
  width: 100%;
  height: 67px;
  margin: 0;
  padding: 0 16px;
  font: 30px/40px "DejaVu Sans", sans-serif;
  color: #000;
  border: 2px solid #bbb;
  border-bottom-color: #d8d8d8;
  border-radius: 6px;
  background: linear-gradient(90deg, #aaa 2px, #e9e9e9 2px) right / 43px 100% no-repeat #fafafa;
}
.w-period { width: 249px; }
.w-month { width: 246px; }
.w-year { width: 158px; }
.w-rev { width: 436px; }
.w-exp { width: 348px; }

/* report */
.report {
  margin-top: 50px;
  padding: 59px 48px 100px 47px;
  border: 2px solid #ccc;
  border-radius: 12px;
}
h2 { line-height: 71px; text-align: center; }
.sub { margin: 0; font: 40px/55px "Liberation Sans", sans-serif; text-align: center; }
table {
  width: 100%;
  margin-top: 67px;
  table-layout: fixed;
  border-collapse: separate;
  border-spacing: 0;
  font: 30px/40px "Liberation Sans", sans-serif;
}
.c-name { width: 438px; }
.c-feb, .c-mar { width: 458px; }
.c-apr { width: 469px; }
.c-tot { width: 478px; }
th {
  height: 75px;
  padding: 2px 13px 0;
  font: 30px/40px "DejaVu Sans", sans-serif;
  color: #fff;
  background: #1083e0;
  text-align: right;
}
th:first-child { text-align: left; }
td { height: 62px; padding: 0 20px 0 0; text-align: right; white-space: nowrap; border-bottom: 2px solid #e3e3e3; }
td:first-child { text-align: left; padding: 0 0 0 13px; }
td.in1:first-child { padding-left: 38px; }
td.in2:first-child { padding-left: 63px; }
td.in3:first-child { padding-left: 138px; }
.group td { height: 100px; padding-top: 37px !important; font-weight: bold; }
.strong td, .total td, .net td { font-weight: bold; }
.total td { height: 63px; border-top: 2px solid #888; border-bottom: 2px solid #888; }
.net td { height: 83px; padding-top: 14px !important; border-bottom: 7px double #888; }
td a { color: #00f; text-decoration: none; }
.hint { border-bottom: 2px dashed #000; }
.edit { margin-left: 16px; }
.notes { padding-top: 58px; font: 28px/40px "DejaVu Sans", sans-serif; color: #808080; }
.notes p { margin: 0 0 36px; }

.scrollbar { flex: none; display: flex; flex-direction: column; width: 42px; background: #f0f0f0; }
.scrollbar svg { width: 42px; height: 42px; }
.scrollbar::before, .scrollbar::after { content: ""; }
.scrollbar svg:first-child { order: 1; }
.scrollbar::before { order: 2; flex: 232; }
.scrollbar .thumb { order: 3; flex: 1087; background: #cdcdcd; }
.scrollbar::after { order: 4; flex: 418; }
.scrollbar svg:last-child { order: 5; }

/* find bar */
.findbar {
  flex: none;
  display: flex;
  align-items: center;
  height: 75px;
  padding: 0 29px 0 20px;
  background: #efefef;
  border-top: 2px solid #b2b2b2;
  font-size: 29px;
}
.findbox { display: flex; width: 534px; height: 50px; border: 2px solid #a0a0a0; border-radius: 6px; background: #fff; }
.findbox input { flex: 1; padding-left: 16px; }
.findbox button { display: flex; align-items: center; justify-content: center; width: 57px; border-left: 2px solid #a0a0a0; background: #fafafa; }
.findbox svg { width: 26px; height: 20px; }
.flat { margin-left: 30px; }
.flat + .flat { margin-left: 48px; }
.flat u { text-decoration-thickness: 2px; text-underline-offset: 4px; }
.findclose { margin-left: auto; }
.findclose svg { width: 22px; height: 22px; }

/* task bar */
.taskbar {
  position: relative;
  z-index: 0;
  flex: none;
  display: flex;
  align-items: center;
  gap: 2px;
  height: 88px;
  color: #fff;
  background:
    linear-gradient(#cb8485 51px, #bf7779 51px 66px, #b56f72 66px) 319px 0 / 2330px 100% no-repeat,
    linear-gradient(#ba7477, #a9686c);
  border-top: 1px solid #9a5558;
}
.defs { position: absolute; }
.ghost { position: absolute; z-index: -1; left: 357px; top: 2px; display: flex; gap: 136px; color: #7c4250; }
.ghost-list {
  position: absolute;
  z-index: 1;
  left: 2490px;
  top: 0;
  width: 56px;
  height: 50px;
  border: 1px solid #8f7389;
  background: repeating-linear-gradient(transparent 0 5px, #8c5664 5px 8px) 12px 0 / 36px 44px no-repeat;
  opacity: .5;
}
.start { display: flex; justify-content: center; width: 89px; }
.task { display: flex; align-items: center; justify-content: center; width: 126px; height: 87px; border: 2px solid transparent; }
.start svg, .task svg { width: 80px; height: 80px; }
.open { background: rgba(255, 255, 255, .22); border-color: rgba(255, 255, 255, .4); }
.focus { background: rgba(255, 255, 255, .4); border-color: #fff; }
.tray { display: flex; align-items: center; margin-left: auto; padding-right: 29px; font-size: 29px; }
.tray .up { width: 20px; height: 14px; margin-right: 30px; }
.ti { width: 40px; height: 40px; margin-right: 20px; }
.lang { margin: 8px 37px 0 8px; }
.clock { display: flex; flex-direction: column; align-items: center; }
```
